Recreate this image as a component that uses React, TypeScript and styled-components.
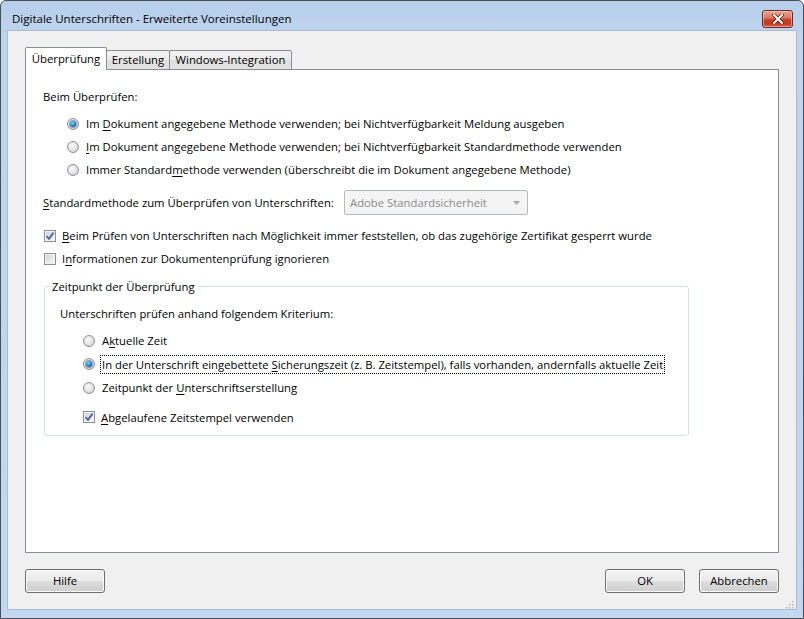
import React from 'react';
import styled, { createGlobalStyle } from 'styled-components';

const FONT = `"Open Sans", "Noto Sans", "DejaVu Sans", sans-serif`;

const Global = createGlobalStyle`
  html, body { margin: 0; padding: 0; background: #fff; overflow: hidden; }
  body { font-family: ${FONT}; font-size: 11.3px; color: #000; }
  * { box-sizing: border-box; }
  fieldset { min-inline-size: 0; }
`;

const Frame = styled.div`
  width: 804px;
  height: 619px;
  display: flex;
  flex-direction: column;
  background: linear-gradient(#b7cfeb 0px, #bdd3ee 29px, #c3d8f0 100%);
  border: 1px solid #4a4f57;
  border-radius: 6px 6px 0 0;
  padding: 0 6px 8px 6px;
`;

const TitleBar = styled.div`
  height: 29px;
  flex: none;
  display: flex;
  align-items: center;
  padding-left: 5px;
  position: relative;
`;

const TitleText = styled.div`
  font-size: 11.5px;
  color: #000;
  margin-top: 6px;
`;

const CloseButton = styled.div`
  position: absolute;
  right: 4px;
  top: 9px;
  width: 31px;
  height: 18px;
  border: 1px solid #6e2a1e;
  border-radius: 3px;
  background: linear-gradient(#eaa694 0%, #dc7d66 40%, #c8402a 55%, #c23a1f 80%, #d86a52 100%);
  box-shadow: inset 0 0 0 1px rgba(255, 220, 210, 0.5);
  display: flex;
  align-items: center;
  justify-content: center;
`;

const Client = styled.div`
  flex: 1;
  display: flex;
  flex-direction: column;
  background: #f0f0f0;
  border: 1px solid #a9bcd4;
  padding: 16px 17px 16px 17px;
  position: relative;
`;

const TabStrip = styled.div`
  display: flex;
  align-items: flex-end;
  height: 23px;
  margin-bottom: -1px;
  position: relative;
  z-index: 1;
`;

const Tab = styled.div<{ $active?: boolean; $w: number }>`
  width: ${(p) => p.$w}px;
  height: ${(p) => (p.$active ? 23 : 20)}px;
  margin-left: ${(p) => (p.$active ? 0 : -1)}px;
  border: 1px solid #898c95;
  border-bottom: ${(p) => (p.$active ? 'none' : '1px solid #898c95')};
  border-radius: 2px 2px 0 0;
  background: ${(p) =>
    p.$active ? '#fff' : 'linear-gradient(#f3f3f3 0%, #ebebeb 50%, #dedede 50%, #e3e3e3 100%)'};
  display: flex;
  align-items: center;
  justify-content: center;
  padding-bottom: ${(p) => (p.$active ? 2 : 1)}px;
  white-space: nowrap;
  position: relative;
  z-index: ${(p) => (p.$active ? 2 : 1)};
`;

const Panel = styled.div`
  flex: 1;
  background: #fff;
  border: 1px solid #898c95;
  padding: 0 0 0 17px;
  display: flex;
  flex-direction: column;
`;

const Line = styled.div<{ $h?: number; $mt?: number; $indent?: number }>`
  display: flex;
  align-items: center;
  height: ${(p) => p.$h ?? 23}px;
  margin-top: ${(p) => p.$mt ?? 0}px;
  padding-left: ${(p) => p.$indent ?? 0}px;
  white-space: nowrap;
`;

const RadioCircle = styled.span<{ $checked?: boolean }>`
  width: 12px;
  height: 12px;
  flex: none;
  border-radius: 50%;
  border: 1px solid #8c8f91;
  background: radial-gradient(circle at 42% 38%, #fafafa 0%, #e4e4e4 50%, #c6c6c6 100%);
  display: flex;
  align-items: center;
  justify-content: center;
  margin-right: 5px;
  &::after {
    content: '';
    display: ${(p) => (p.$checked ? 'block' : 'none')};
    width: 6px;
    height: 6px;
    border-radius: 50%;
    background: radial-gradient(circle at 40% 35%, #8fd6ff 0%, #2a8ad4 45%, #0d3f7a 100%);
    box-shadow: 0 0 0 1px rgba(30, 70, 120, 0.45);
  }
`;

const CheckBox = styled.span`
  width: 12px;
  height: 12px;
  flex: none;
  border: 1px solid #8c8f91;
  background: linear-gradient(135deg, #cfcfcf 0%, #e8e8e8 55%, #fafafa 100%);
  box-shadow: inset 0 0 0 1px #f3f3f3;
  display: flex;
  align-items: center;
  justify-content: center;
  margin-right: 4px;
`;

const Label = styled.span<{ $focus?: boolean }>`
  padding: 1px 1px;
  border: 1px ${(p) => (p.$focus ? 'dotted #000' : 'solid transparent')};
  line-height: 15px;
`;

const Key = styled.span`
  text-decoration: underline;
  text-underline-offset: 2px;
`;

const FieldLabel = styled.span`
  width: 301px;
  flex: none;
`;

const Select = styled.div`
  width: 184px;
  height: 25px;
  border: 1px solid #b8bbbe;
  border-radius: 2px;
  background: #f4f4f4;
  color: #8b8b8b;
  display: flex;
  align-items: center;
  justify-content: space-between;
  padding: 0 7px 0 5px;
`;

const Group = styled.fieldset`
  width: 645px;
  margin: 9px 0 0 1px;
  padding: 0 0 6px 15px;
  border: 1px solid #d5dfe5;
  border-radius: 3px;
`;

const Legend = styled.legend`
  margin-left: -10px;
  padding: 0 2px;
  line-height: 15px;
`;

const ButtonRow = styled.div`
  display: flex;
  align-items: center;
  margin-top: 16px;
  height: 24px;
  flex: none;
`;

const Spacer = styled.div`
  flex: 1;
`;

const Button = styled.div<{ $ml?: number }>`
  width: 80px;
  height: 24px;
  margin-left: ${(p) => p.$ml ?? 0}px;
  border: 1px solid #707070;
  border-radius: 3px;
  background: linear-gradient(#f2f2f2 0%, #ebebeb 48%, #dddddd 52%, #cfcfcf 100%);
  box-shadow: inset 0 0 0 1px #fbfbfb;
  display: flex;
  align-items: center;
  justify-content: center;
  padding-bottom: 1px;
`;

const Grip = styled.div`
  position: absolute;
  right: 2px;
  bottom: 2px;
  width: 10px;
  height: 10px;
`;

const Check = () => (
  <svg width="10" height="10" viewBox="0 0 10 10">
    <path d="M1.5 5.2 L4 7.8 L8.6 1.6" fill="none" stroke="#4c61a5" strokeWidth="1.8" />
  </svg>
);

const Arrow = () => (
  <svg width="7" height="4" viewBox="0 0 7 4">
    <path d="M0 0 H7 L3.5 4 Z" fill="#a9a9a9" />
  </svg>
);

const CloseX = () => (
  <svg width="12" height="10" viewBox="0 0 12 10">
    <path d="M2 1 L10 9 M10 1 L2 9" stroke="#5a1a10" strokeWidth="3.4" strokeLinecap="square" />
    <path d="M2 1 L10 9 M10 1 L2 9" stroke="#ffffff" strokeWidth="2" strokeLinecap="square" />
  </svg>
);

const GripDots = () => (
  <svg width="10" height="10" viewBox="0 0 10 10">
    {[
      [8, 2],
      [8, 5],
      [5, 5],
      [8, 8],
      [5, 8],
      [2, 8],
    ].map(([x, y], i) => (
      <rect key={i} x={x} y={y} width="1.5" height="1.5" fill="#b8b8b8" />
    ))}
  </svg>
);

const Radio = ({ checked, children, focus }: { checked?: boolean; children: React.ReactNode; focus?: boolean }) => (
  <>
    <RadioCircle $checked={checked} />
    <Label $focus={focus}>{children}</Label>
  </>
);

export default function App() {
  return (
    <>
      <Global />
      <Frame>
        <TitleBar>
          <TitleText>Digitale Unterschriften - Erweiterte Voreinstellungen</TitleText>
          <CloseButton>
            <CloseX />
          </CloseButton>
        </TitleBar>
        <Client>
          <TabStrip>
            <Tab $active $w={82}>Überprüfung</Tab>
            <Tab $w={64}>Erstellung</Tab>
            <Tab $w={123}>Windows-Integration</Tab>
          </TabStrip>
          <Panel>
            <Line $h={22} $mt={15}>Beim Überprüfen:</Line>
            <Line $mt={5} $indent={24}>
              <Radio checked>
                Im <Key>D</Key>okument angegebene Methode verwenden; bei Nichtverfügbarkeit Meldung ausgeben
              </Radio>
            </Line>
            <Line $indent={24}>
              <Radio>
                <Key>I</Key>m Dokument angegebene Methode verwenden; bei Nichtverfügbarkeit Standardmethode verwenden
              </Radio>
            </Line>
            <Line $indent={24}>
              <Radio>
                Immer Standard<Key>m</Key>ethode verwenden (überschreibt die im Dokument angegebene Methode)
              </Radio>
            </Line>
            <Line $h={25} $mt={9}>
              <FieldLabel>
                <Key>S</Key>tandardmethode zum Überprüfen von Unterschriften:
              </FieldLabel>
              <Select>
                <span>Adobe Standardsicherheit</span>
                <Arrow />
              </Select>
            </Line>
            <Line $mt={9} $indent={1}>
              <CheckBox>
                <Check />
              </CheckBox>
              <Label>
                <Key>B</Key>eim Prüfen von Unterschriften nach Möglichkeit immer feststellen, ob das zugehörige Zertifikat gesperrt wurde
              </Label>
            </Line>
            <Line $indent={1}>
              <CheckBox />
              <Label>
                I<Key>n</Key>formationen zur Dokumentenprüfung ignorieren
              </Label>
            </Line>
            <Group>
              <Legend>Zeitpunkt der Überprüfung</Legend>
              <Line $h={22} $mt={8}>Unterschriften prüfen anhand folgendem Kriterium:</Line>
              <Line $h={23.5} $mt={5} $indent={23}>
                <Radio>
                  A<Key>k</Key>tuelle Zeit
                </Radio>
              </Line>
              <Line $h={23.5} $indent={23}>
                <Radio checked focus>
                  In der Unterschrift eingebettete <Key>S</Key>icherungszeit (z. B. Zeitstempel), falls vorhanden, andernfalls aktuelle Zeit
                </Radio>
              </Line>
              <Line $h={23.5} $indent={23}>
                <Radio>
                  Zeitpunkt der <Key>U</Key>nterschriftserstellung
                </Radio>
              </Line>
              <Line $mt={6} $indent={23}>
                <CheckBox>
                  <Check />
                </CheckBox>
                <Label>
                  <Key>A</Key>bgelaufene Zeitstempel verwenden
                </Label>
              </Line>
            </Group>
          </Panel>
          <ButtonRow>
            <Button>Hilfe</Button>
            <Spacer />
            <Button>OK</Button>
            <Button $ml={14}>Abbrechen</Button>
          </ButtonRow>
          <Grip>
            <GripDots />
          </Grip>
        </Client>
      </Frame>
    </>
  );
}
